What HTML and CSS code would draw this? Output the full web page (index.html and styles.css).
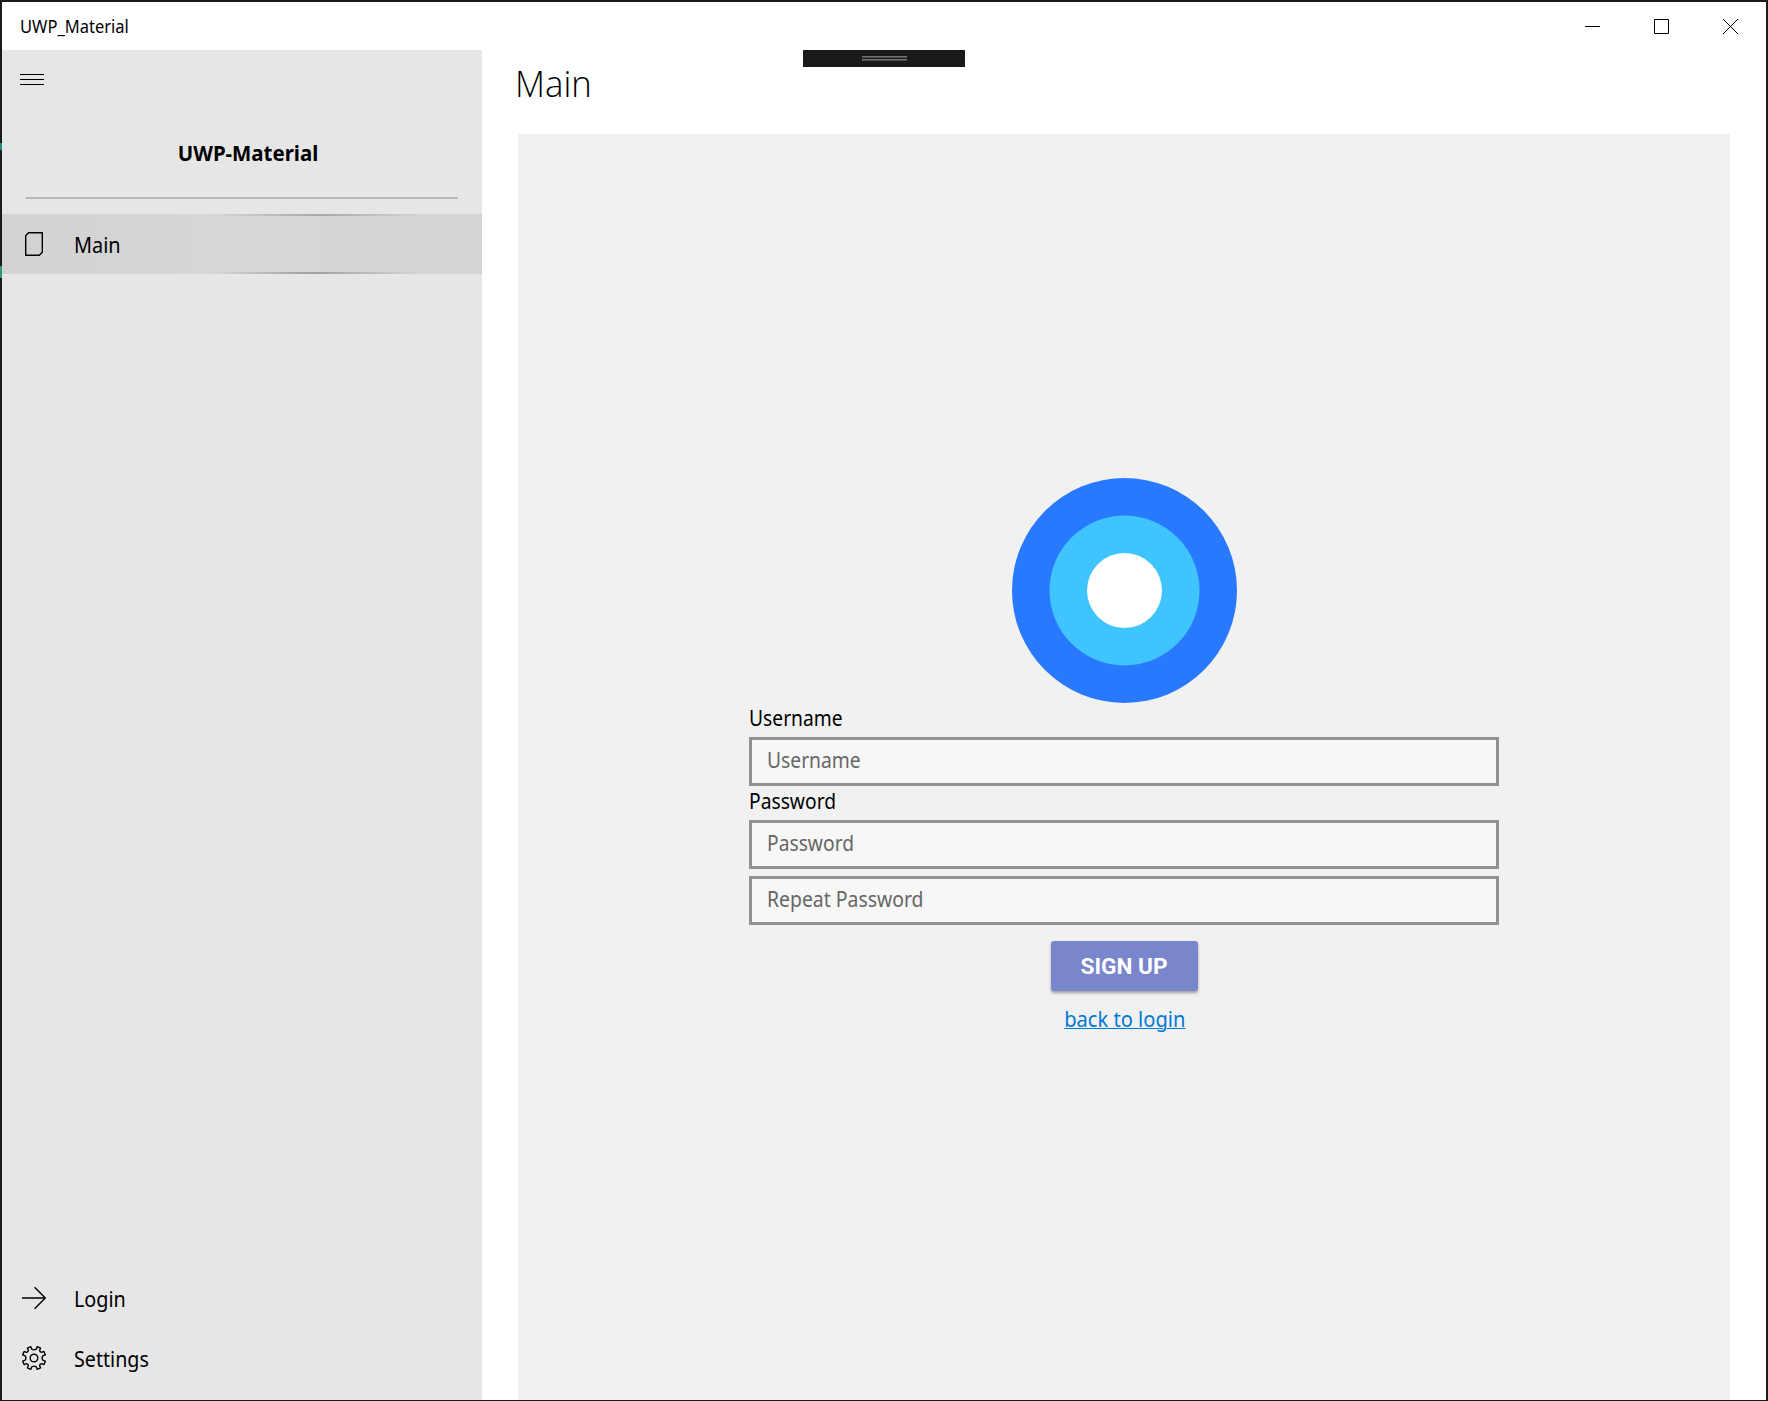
FILE: index.html
```html
<!DOCTYPE html>
<html lang="en">
<head>
<meta charset="utf-8">
<title>UWP_Material</title>
<link rel="stylesheet" href="styles.css">
</head>
<body>
<div class="window">
  <header class="titlebar">
    <span class="app-title">UWP_Material</span>
    <div class="controls">
      <svg class="control" viewBox="0 0 15 15"><path d="M0 7.5H15"/></svg>
      <svg class="control" viewBox="0 0 15 15"><path d="M.5 .5H14.5V14.5H.5Z"/></svg>
      <svg class="control" viewBox="0 0 15 15"><path d="M0 0L15 15M15 0L0 15"/></svg>
    </div>
  </header>
  <div class="body">
    <nav class="sidebar">
      <svg class="menu" viewBox="0 0 24 11"><path d="M0 .5H24M0 5.5H24M0 10.5H24"/></svg>
      <h2 class="brand"><span>UWP-Material</span></h2>
      <hr class="rule">
      <a class="item selected">
        <svg class="icon" viewBox="0 0 24 24"><path d="M6.5 .7H20.3V20.2L17.3 23.3H3.7V3.7Z"/></svg>
        <span class="t-main">Main</span>
      </a>
      <div class="footer">
        <a class="item">
          <svg class="icon" viewBox="0 0 24 24"><path d="M0 12H23.3M12.6 1.3L23.3 12L12.6 22.7"/></svg>
          <span class="t-login">Login</span>
        </a>
        <a class="item">
          <svg class="icon gear" viewBox="0 0 24 24"><path d="M9.8 3.2L8.8 .7L5.4 2.1L6.4 4.5Q6 6 4.5 6.4L2.1 5.4L.7 8.8L3.2 9.8Q4.6 12 3.2 14.2L.7 15.2L2.1 18.6L4.5 17.6Q6 18 6.4 19.5L5.4 21.9L8.8 23.3L9.8 20.8Q12 19.4 14.2 20.8L15.2 23.3L18.6 21.9L17.6 19.5Q18 18 19.5 17.6L21.9 18.6L23.3 15.2L20.8 14.2Q19.4 12 20.8 9.8L23.3 8.8L21.9 5.4L19.5 6.4Q18 6 17.6 4.5L18.6 2.1L15.2 .7L14.2 3.2Q12 4.6 9.8 3.2Z"/><circle cx="12" cy="12" r="3.8"/></svg>
          <span class="t-settings">Settings</span>
        </a>
      </div>
    </nav>
    <main class="content">
      <div class="grip"><i></i></div>
      <h1 class="heading"><span>Main</span></h1>
      <section class="panel">
        <form class="form">
          <svg class="logo" viewBox="0 0 225 225"><circle class="outer" cx="112.5" cy="112.5" r="112.5"/><circle class="middle" cx="112.5" cy="112.5" r="75"/><circle class="inner" cx="112.5" cy="112.5" r="37.5"/></svg>
          <div class="label"><span>Username</span></div>
          <div class="field"><span>Username</span></div>
          <div class="label"><span>Password</span></div>
          <div class="field"><span>Password</span></div>
          <div class="field repeat"><span>Repeat Password</span></div>
          <div class="signup">SIGN UP</div>
          <a class="back"><span>back to login</span></a>
        </form>
      </section>
    </main>
  </div>
</div>
</body>
</html>
```

FILE: styles.css
```css
* { box-sizing: border-box; }
body {
  margin: 0;
  height: 1401px;
  padding: 2px 2px 1px;
  background:
    linear-gradient(#1f8f7c, #1f8f7c) 0 143px / 2px 7px no-repeat,
    linear-gradient(#2c9a6c, #2c9a6c) 0 266px / 2px 12px no-repeat,
    #1c1b1c;
  color: #000;
  font: 21.5px "Noto Sans", sans-serif;
  overflow: hidden;
}
svg { display: block; fill: none; stroke: #000; stroke-width: 1; flex: none; }
span { display: inline-block; white-space: nowrap; transform-origin: left; }
.window { height: 1398px; display: flex; flex-direction: column; background: #fff; }
.titlebar { height: 48px; display: flex; align-items: center; justify-content: space-between; padding: 0 28px 0 18px; }
.app-title { font-size: 17.3px; transform: scaleX(.955); }
.controls { display: flex; gap: 54px; margin-top: 1px; }
.control { width: 15px; height: 15px; }
.body { flex: 1; display: flex; min-height: 0; }
.sidebar { width: 480px; background: #e6e6e6; display: flex; flex-direction: column; }
.menu { width: 24px; height: 11px; margin: 24px 0 0 18px; }
.brand { margin: 53px 0 0 11px; height: 30px; line-height: 30px; text-align: center; font-size: 21.5px; font-weight: 700; }
.brand span { transform: scaleX(.95); transform-origin: center; }
.rule { width: 432px; height: 2px; margin: 29px 0 15px 24px; border: 0; background: #b8b8b8; }
.item { height: 60px; display: flex; align-items: center; gap: 28px; padding-left: 20px; }
.icon { width: 24px; height: 24px; stroke-width: 1.4; }
.gear { stroke-linejoin: round; }
.t-main { transform: scaleX(.925); }
.t-login { transform: scaleX(.92); }
.t-settings { transform: scaleX(.915); }
.selected {
  background:
    linear-gradient(90deg, transparent 208px, #a8a8a8 318px, transparent 420px) top / 100% 2px no-repeat,
    linear-gradient(90deg, transparent 208px, #a0a0a0 310px, transparent 420px) bottom / 100% 2px no-repeat,
    linear-gradient(90deg, #d2d2d2, #d7d7d7 50%, #d4d4d4);
}
.footer { margin-top: auto; padding-bottom: 12px; }
.content { flex: 1; display: flex; flex-direction: column; position: relative; padding: 0 36px; }
.grip { position: absolute; left: 321px; top: 0; width: 162px; height: 17px; background: #1a1a1a; padding: 6px 0 0 59px; }
.grip i { display: block; width: 45px; height: 5px; background: linear-gradient(#747474 1px, #4c4c4c 1px 2px, #1a1a1a 2px 3px, #747474 3px 4px, #4c4c4c 4px); }
.heading { margin: 0 0 0 -3px; height: 84px; font: 300 36px/68px "Open Sans", sans-serif; }
.heading span { transform: scaleX(.965); }
.panel { flex: 1; background: #f1f1f1; display: flex; justify-content: center; }
.form { width: 750px; margin-top: 344px; display: flex; flex-direction: column; }
.logo { width: 225px; height: 225px; align-self: center; stroke: none; }
.outer { fill: #2979ff; }
.middle { fill: #40c4ff; }
.inner { fill: #fff; }
.label { height: 34px; line-height: 30px; }
.label span, .field span { transform: scaleX(.895); }
.field { height: 49px; border: 3px solid #919191; background: #f7f7f7; color: #666; line-height: 40px; padding-left: 15px; }
.repeat { margin-top: 7px; }
.repeat span { transform: scaleX(.902); }
.signup { align-self: center; width: 147px; height: 50px; margin-top: 16px; border-radius: 3px; background: #7986cb; color: #fff; font: 700 22.6px/51px Roboto, sans-serif; text-align: center; box-shadow: 0 2px 3px rgba(0,0,0,.35); }
.back { align-self: center; margin: 13px 0 0 1px; height: 30px; line-height: 30px; color: #0078d7; }
.back span { transform: scaleX(.935); transform-origin: center; text-decoration: underline; text-decoration-thickness: 1px; text-underline-offset: 1px; }
```
